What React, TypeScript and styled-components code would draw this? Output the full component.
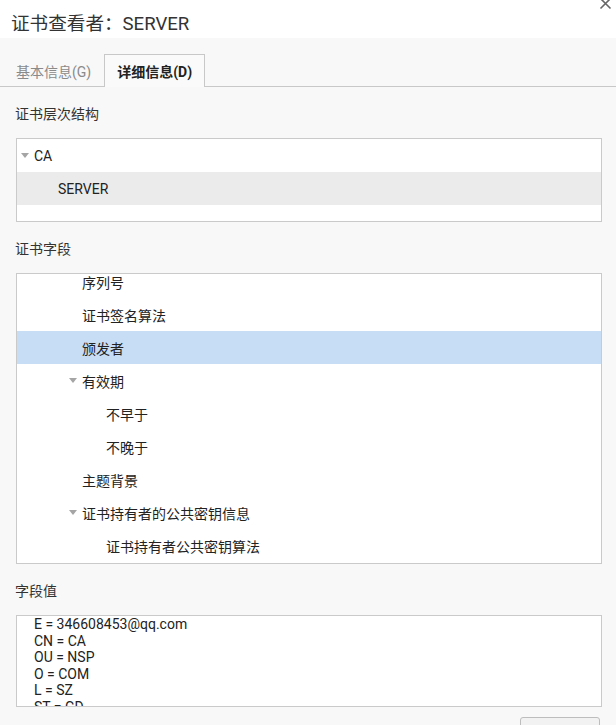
import styled, { createGlobalStyle } from 'styled-components';

const GlobalStyle = createGlobalStyle`
  html, body {
    margin: 0;
    padding: 0;
    height: 725px;
    overflow: hidden;
    background: #f8f8f8;
  }
  body {
    font-family: Roboto, 'Noto Sans CJK SC', sans-serif;
    color: #222;
  }
`;

type Row = { label: string; depth: number; open?: boolean; selected?: 'focus' | 'blur' };

const hierarchy: Row[] = [
  { label: 'CA', depth: 0, open: true },
  { label: 'SERVER', depth: 1, selected: 'blur' },
];

const fields: Row[] = [
  { label: '序列号', depth: 2 },
  { label: '证书签名算法', depth: 2 },
  { label: '颁发者', depth: 2, selected: 'focus' },
  { label: '有效期', depth: 2, open: true },
  { label: '不早于', depth: 3 },
  { label: '不晚于', depth: 3 },
  { label: '主题背景', depth: 2 },
  { label: '证书持有者的公共密钥信息', depth: 2, open: true },
  { label: '证书持有者公共密钥算法', depth: 3 },
];

const values = [
  'E = 346608453@qq.com',
  'CN = CA',
  'OU = NSP',
  'O = COM',
  'L = SZ',
  'ST = GD',
];

export default function App() {
  return (
    <Dialog>
      <GlobalStyle />
      <TitleBar>
        <Title>证书查看者：SERVER</Title>
        <CloseButton aria-label="close">
          <svg width="13" height="13" viewBox="0 0 13 13">
            <path d="M1.5 1.5 L11.5 11.5 M11.5 1.5 L1.5 11.5" stroke="#666" strokeWidth="1.6" />
          </svg>
        </CloseButton>
      </TitleBar>
      <TabBar>
        <Tab>基本信息(G)</Tab>
        <Tab active>详细信息(D)</Tab>
      </TabBar>
      <Content>
        <SectionLabel>证书层次结构</SectionLabel>
        <TreeBox height={84}>
          <TreeList>
            {hierarchy.map((r) => (
              <TreeRow key={r.label} depth={r.depth} selected={r.selected}>
                {r.open && <Arrow />}
                {r.label}
              </TreeRow>
            ))}
          </TreeList>
        </TreeBox>

        <SectionLabel>证书字段</SectionLabel>
        <TreeBox height={291}>
          <TreeList offset={-9}>
            {fields.map((r) => (
              <TreeRow key={r.label} depth={r.depth} selected={r.selected}>
                {r.open && <Arrow />}
                {r.label}
              </TreeRow>
            ))}
          </TreeList>
        </TreeBox>

        <SectionLabel>字段值</SectionLabel>
        <ValueBox>
          {values.map((v) => (
            <ValueLine key={v}>{v}</ValueLine>
          ))}
        </ValueBox>

        <Footer>
          <Button />
        </Footer>
      </Content>
    </Dialog>
  );
}

const Dialog = styled.div`
  width: 616px;
  height: 725px;
  display: flex;
  flex-direction: column;
  background: #f8f8f8;
  overflow: hidden;

  & > * {
    flex-shrink: 0;
  }
`;

const TitleBar = styled.div`
  position: relative;
  height: 38px;
  background: #fff;
  display: flex;
  align-items: center;
  padding-left: 11px;
`;

const Title = styled.div`
  font-size: 18.6px;
  color: #333;
  margin-top: 5px;
`;

const CloseButton = styled.div`
  position: absolute;
  top: -3px;
  right: 4px;
  width: 13px;
  height: 13px;
  display: flex;
`;

const TabBar = styled.div`
  display: flex;
  align-items: flex-end;
  padding: 16px 0 0 3px;
  border-bottom: 1px solid #c8c8c8;
`;

const Tab = styled.div<{ active?: boolean }>`
  height: 33px;
  box-sizing: border-box;
  padding: 0 12px;
  display: flex;
  align-items: center;
  font-size: 14px;
  color: ${(p) => (p.active ? '#222' : '#8a8a8a')};
  font-weight: ${(p) => (p.active ? 700 : 400)};
  border: 1px solid ${(p) => (p.active ? '#c8c8c8' : 'transparent')};
  border-bottom: none;
  background: ${(p) => (p.active ? '#fafafa' : 'transparent')};
  margin-bottom: -1px;
`;

const Content = styled.div`
  display: flex;
  flex-direction: column;
  padding: 0 14px 0 16px;

  & > * {
    flex-shrink: 0;
  }
`;

const SectionLabel = styled.div`
  font-size: 14px;
  color: #333;
  line-height: 20px;
  padding: 17px 0 14px 0;
  margin-left: -1px;
`;

const TreeBox = styled.div<{ height: number }>`
  height: ${(p) => p.height}px;
  box-sizing: border-box;
  border: 1px solid #cacaca;
  background: #fff;
  overflow: hidden;
`;

const TreeList = styled.div<{ offset?: number }>`
  display: flex;
  flex-direction: column;
  margin-top: ${(p) => p.offset ?? 0}px;
`;

const TreeRow = styled.div<{ depth: number; selected?: 'focus' | 'blur' }>`
  position: relative;
  height: 33px;
  flex-shrink: 0;
  display: flex;
  align-items: center;
  font-size: 14px;
  color: #222;
  padding-left: ${(p) => 17 + p.depth * 24}px;
  background: ${(p) =>
    p.selected === 'focus' ? '#c7dcf5' : p.selected === 'blur' ? '#ecebec' : 'transparent'};
`;

const Arrow = styled.span`
  position: absolute;
  margin-left: -13px;
  width: 0;
  height: 0;
  border-left: 4px solid transparent;
  border-right: 4px solid transparent;
  border-top: 5px solid #a5a5a5;
`;

const ValueBox = styled.div`
  height: 92px;
  box-sizing: border-box;
  border: 1px solid #cacaca;
  background: #fff;
  padding: 0 0 0 17px;
  overflow: hidden;
`;

const ValueLine = styled.div`
  font-size: 14px;
  line-height: 16.6px;
  color: #222;
`;

const Footer = styled.div`
  display: flex;
  justify-content: flex-end;
  padding: 10px 2px 0 0;
`;

const Button = styled.div`
  width: 80px;
  height: 30px;
  box-sizing: border-box;
  border: 1px solid #bdbdbd;
  border-radius: 3px;
  background: #f2f2f2;
`;
